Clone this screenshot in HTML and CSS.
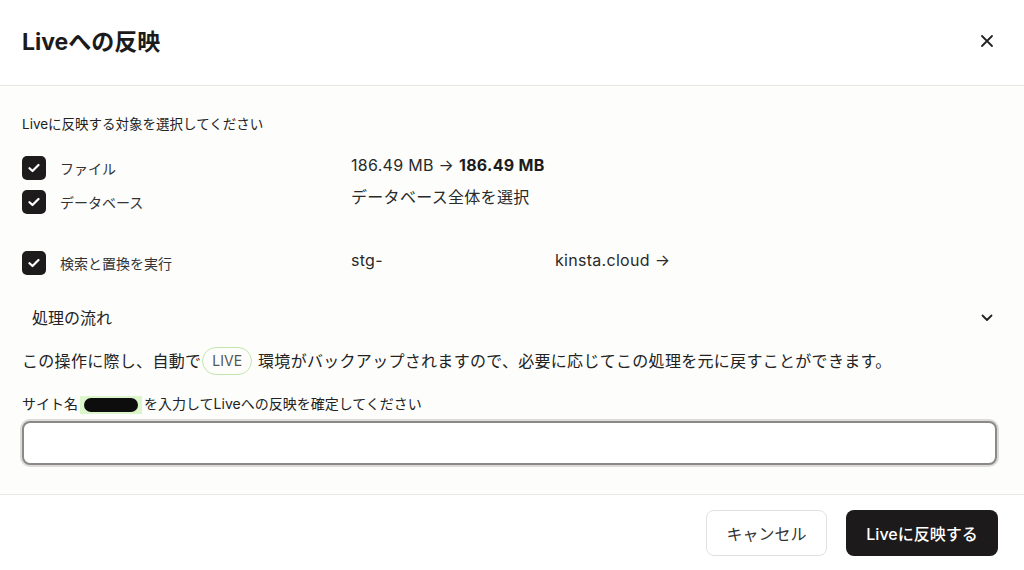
FILE: index.html
```html
<!DOCTYPE html>
<html lang="ja">
<head>
  <meta charset="UTF-8" />
  <meta name="viewport" content="width=device-width, initial-scale=1.0"/>
  <title>Liveへの反映</title>
  <link rel="stylesheet" href="styles.css">
</head>
<body>

<div class="modal">
  <div class="modal-head">
    <h1>Liveへの反映</h1>
    <button class="close-btn" aria-label="閉じる">
      <svg width="14" height="14" viewBox="0 0 14 14"><path d="M2 2L12 12M12 2L2 12" stroke="#222" stroke-width="1.8" stroke-linecap="round"/></svg>
    </button>
  </div>

  <div class="modal-body">
    <p class="intro">Liveに反映する対象を選択してください</p>

    <div class="opt-row">
      <label class="opt"><span class="check"><svg width="12" height="10" viewBox="0 0 12 10"><path d="M1.5 5.2L4.5 8L10.5 2" fill="none" stroke="#fff" stroke-width="2.2" stroke-linecap="round" stroke-linejoin="round"/></svg></span>ファイル</label>
      <div class="val">186.49 MB → <b>186.49 MB</b></div>
    </div>
    <div class="opt-row">
      <label class="opt"><span class="check"><svg width="12" height="10" viewBox="0 0 12 10"><path d="M1.5 5.2L4.5 8L10.5 2" fill="none" stroke="#fff" stroke-width="2.2" stroke-linecap="round" stroke-linejoin="round"/></svg></span>データベース</label>
      <div class="val up">データベース全体を選択</div>
    </div>
    <div class="opt-row spaced">
      <label class="opt"><span class="check"><svg width="12" height="10" viewBox="0 0 12 10"><path d="M1.5 5.2L4.5 8L10.5 2" fill="none" stroke="#fff" stroke-width="2.2" stroke-linecap="round" stroke-linejoin="round"/></svg></span>検索と置換を実行</label>
      <div class="val">stg-<span class="redact"></span>kinsta.cloud →</div>
    </div>

    <div class="flow">
      <span>処理の流れ</span>
      <svg width="12" height="8" viewBox="0 0 12 8"><path d="M1.5 1.5L6 6L10.5 1.5" fill="none" stroke="#222" stroke-width="1.8" stroke-linecap="round" stroke-linejoin="round"/></svg>
    </div>

    <p class="notice">この操作に際し、自動で<span class="pill">LIVE</span>環境がバックアップされますので、必要に応じてこの処理を元に戻すことができます。</p>

    <p class="confirm">サイト名<span class="mark"><span class="blob"></span></span>を入力してLiveへの反映を確定してください</p>
    <input class="site-input" type="text">
  </div>

  <div class="modal-foot">
    <button class="btn btn-cancel">キャンセル</button>
    <button class="btn btn-primary">Liveに反映する</button>
  </div>
</div>

</body>
</html>
```

FILE: styles.css
```css
* { box-sizing: border-box; }
body {
  margin: 0;
  font-family: 'Inter', 'Noto Sans CJK JP', sans-serif;
  color: #222;
  background: #fff;
}
.modal {
  width: 1024px;
  height: 570px;
  display: flex;
  flex-direction: column;
}
.modal-head {
  height: 86px;
  padding: 0 30px 0 22px;
  display: flex;
  align-items: center;
  justify-content: space-between;
  border-bottom: 1px solid #e7e6e4;
  flex-shrink: 0;
}
.modal-head h1 {
  margin: 0 0 6px;
  font-size: 23px;
  font-weight: 700;
  color: #1c1b1b;
}
.close-btn {
  background: none;
  border: none;
  padding: 0;
  display: flex;
  cursor: pointer;
  margin-bottom: 4px;
}
.modal-body {
  flex: 1;
  background: #fdfdfc;
  padding: 29px 22px 0;
}
.intro {
  margin: 0 0 23px;
  font-size: 13.5px;
  line-height: 18px;
}
.opt-row {
  display: flex;
  height: 24px;
  margin-bottom: 10px;
}
.opt-row.spaced { margin-top: 37px; }
.opt {
  width: 329px;
  display: flex;
  align-items: center;
  font-size: 14px;
  color: #333;
}
.check {
  width: 24px;
  height: 24px;
  border-radius: 5px;
  background: #1d1b1b;
  display: flex;
  align-items: center;
  justify-content: center;
  margin-right: 14px;
}
.val {
  font-size: 16px;
  line-height: 18px;
  color: #2a2a2a;
  letter-spacing: 0.3px;
}
.val.up { margin-top: -2px; }
.val b { font-weight: 700; color: #1c1b1b; }
.redact {
  display: inline-block;
  width: 172px;
}
.flow {
  margin-top: 32px;
  padding: 0 9px 0 10px;
  display: flex;
  align-items: center;
  justify-content: space-between;
  font-size: 16px;
  line-height: 22px;
}
.notice {
  margin: 18px 0 0;
  font-size: 16px;
  line-height: 28px;
  letter-spacing: 0.3px;
  color: #222;
}
.pill {
  display: inline-block;
  height: 28px;
  line-height: 26px;
  padding: 0 9px;
  margin: 0 6px 0 1px;
  border: 1px solid #c3e6ad;
  border-radius: 14px;
  font-size: 14px;
  letter-spacing: 0;
  color: #555;
  vertical-align: top;
}
.confirm {
  margin: 20px 0 0;
  font-size: 14px;
  line-height: 18px;
}
.mark {
  display: inline-block;
  background: #dcf6cc;
  padding: 2px 4px;
  margin: 0 2px;
  vertical-align: middle;
  line-height: 0;
}
.blob {
  display: inline-block;
  width: 54px;
  height: 14px;
  background: #0d0d0d;
  border-radius: 8px;
}
.site-input {
  display: block;
  margin-top: 7px;
  width: calc(100% - 5px);
  height: 44px;
  border: 2px solid #8b8988;
  border-radius: 8px;
  box-shadow: 0 0 0 2px #dcdbda;
  background: #fff;
  outline: none;
}
.modal-foot {
  height: 76px;
  flex-shrink: 0;
  border-top: 1px solid #e9e8e6;
  display: flex;
  align-items: center;
  justify-content: flex-end;
  gap: 19px;
  padding: 0 26px 0 0;
}
.btn {
  height: 46px;
  border-radius: 8px;
  font-family: inherit;
  font-size: 16px;
  cursor: pointer;
}
.btn-cancel {
  width: 121px;
  background: #fff;
  border: 1px solid #e2e1df;
  color: #333;
}
.btn-primary {
  width: 152px;
  background: #1c1a1a;
  border: none;
  color: #fff;
  font-weight: 500;
}
```
